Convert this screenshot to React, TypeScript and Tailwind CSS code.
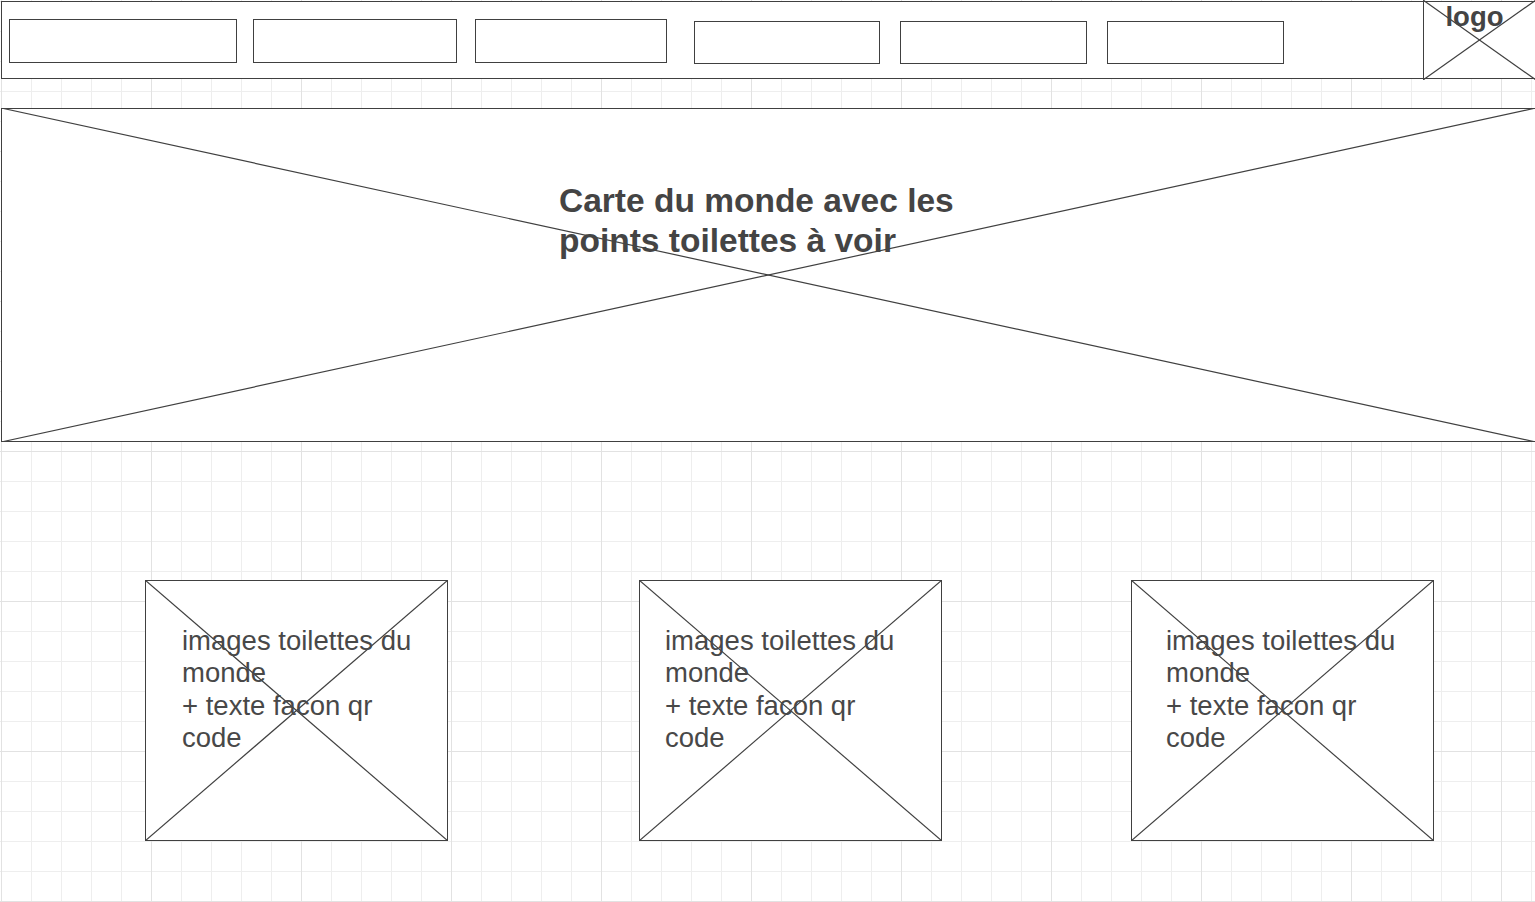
import React from "react";

// Diagonal cross used by the wireframe's "image placeholder" shapes.
function Cross() {
  return (
    <svg
      className="absolute inset-[-1px] w-[calc(100%+2px)] h-[calc(100%+2px)] pointer-events-none"
      viewBox="0 0 100 100"
      preserveAspectRatio="none"
    >
      <line x1="0" y1="0" x2="100" y2="100" stroke="#404040" strokeWidth="1.2" vectorEffect="non-scaling-stroke" />
      <line x1="100" y1="0" x2="0" y2="100" stroke="#404040" strokeWidth="1.2" vectorEffect="non-scaling-stroke" />
    </svg>
  );
}

const NAV_BOXES = [
  { w: "w-[228px] h-[44px] mt-[17px] ml-[7px]" },
  { w: "w-[204px] h-[44px] mt-[17px] ml-[16px]" },
  { w: "w-[192px] h-[44px] mt-[17px] ml-[18px]" },
  { w: "w-[186px] h-[43px] mt-[19px] ml-[27px]" },
  { w: "w-[187px] h-[43px] mt-[19px] ml-[20px]" },
  { w: "w-[177px] h-[43px] mt-[19px] ml-[20px]" },
];

const CARDS = [
  { margin: "ml-[145px]", text: "pl-[36px]" },
  { margin: "ml-[191px]", text: "pl-[25px]" },
  { margin: "ml-[189px]", text: "pl-[34px]" },
];

export default function App() {
  return (
    <div
      className="relative w-[1535px] h-[902px] overflow-hidden bg-white pt-px font-['Liberation_Sans',Arial,sans-serif] bg-[linear-gradient(to_right,#e2e2e2_1px,transparent_1px),linear-gradient(to_bottom,#e2e2e2_1px,transparent_1px),linear-gradient(to_right,#eeeeee_1px,transparent_1px),linear-gradient(to_bottom,#eeeeee_1px,transparent_1px)] [background-size:150px_150px,150px_150px,30px_30px,30px_30px] [background-position:1px_1px]"
    >
      {/* Header with nav placeholders and logo */}
      <div className="ml-px w-[1535px] h-[78px] border border-[#404040] bg-white flex items-start">
        {NAV_BOXES.map((b, i) => (
          <div key={i} className={`${b.w} shrink-0 border border-[#404040] bg-white`} />
        ))}
        <div className="relative ml-auto w-[112px] h-[78px] -mt-px border-l border-[#404040] flex justify-center">
          <Cross />
          <span className="relative text-[27.5px] leading-[32px] font-bold text-[#444444] mt-0 -ml-[10px]">
            logo
          </span>
        </div>
      </div>

      {/* World map placeholder */}
      <div className="relative ml-px mt-[29px] w-[1535px] h-[334px] border border-[#404040] bg-white">
        <Cross />
        <p className="relative pl-[557px] pt-[72px] w-[980px] text-[33.5px] leading-[40px] font-bold text-[#444444]">
          Carte du monde avec les
          <br />
          points toilettes à voir
        </p>
      </div>

      {/* Image cards */}
      <div className="flex mt-[138px]">
        {CARDS.map((c, i) => (
          <div
            key={i}
            className={`relative ${c.margin} w-[303px] h-[261px] shrink-0 border border-[#404040] bg-white`}
          >
            <Cross />
            <div className={`relative ${c.text} pt-[44px]`}>
              <p className="w-[245px] text-[27.5px] leading-[32.4px] text-[#484848]">
                images toilettes du monde
                <br />+ texte facon qr code
              </p>
            </div>
          </div>
        ))}
      </div>
    </div>
  );
}
